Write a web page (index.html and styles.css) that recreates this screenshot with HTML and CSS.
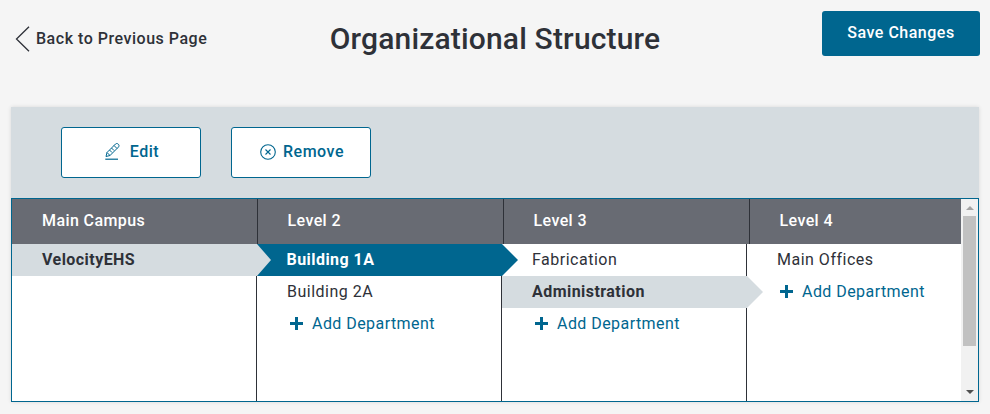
FILE: index.html
```html
<!DOCTYPE html>
<html lang="en">
<head>
<meta charset="utf-8">
<title>Organizational Structure</title>
<link rel="stylesheet" href="styles.css">
</head>
<body>
<header class="top">
  <a class="back" href="#">
    <svg class="back-icon" width="15" height="26" viewBox="0 0 15 26"><path d="M14 .8 1.500 13 14 25.200" fill="none" stroke="#2e3138" stroke-width="1.300"/></svg>
    <span>Back to Previous Page</span>
  </a>
  <h1 class="title">Organizational Structure</h1>
  <button class="save">Save Changes</button>
</header>
<section class="card">
  <div class="toolbar">
    <button class="tool tool-edit">
      <svg width="15" height="17" viewBox="0 0 15 17" fill="none" stroke="#00668f" stroke-width="1"><path d="M1 13.500 2 9.500 10.500 1c1-.8 2-.6 2.800.2s1 1.800.2 2.800L5 12.500z"/><path d="M2 9.500l3 3M9 2.500l3 3M4.500 7l2.500 2.500M6.500 5l2.500 2.500"/><path d="M.3 16.200h12.700" stroke-width="1.200"/></svg>
      Edit
    </button>
    <button class="tool tool-remove">
      <svg width="16" height="16" viewBox="0 0 16 16" fill="none" stroke="#00668f" stroke-width="1.100"><circle cx="8" cy="8" r="7.300"/><path d="M5.500 5.500l5 5M10.500 5.500l-5 5"/></svg>
      Remove
    </button>
  </div>
  <div class="table">
    <div class="main">
      <div class="heads">
        <div class="head">Main Campus</div>
        <div class="head">Level 2</div>
        <div class="head">Level 3</div>
        <div class="head last">Level 4</div>
      </div>
      <div class="cols">
        <div class="col">
          <div class="row grey first-arrow">VelocityEHS</div>
        </div>
        <div class="col">
          <div class="row blue">Building 1A</div>
          <div class="row">Building 2A</div>
          <a class="row add" href="#"><svg width="13" height="13" viewBox="0 0 13 13"><path d="M6.500 0v13M0 6.500h13" stroke="#00668f" stroke-width="3"/></svg>Add Department</a>
        </div>
        <div class="col">
          <div class="row">Fabrication</div>
          <div class="row grey">Administration</div>
          <a class="row add" href="#"><svg width="13" height="13" viewBox="0 0 13 13"><path d="M6.500 0v13M0 6.500h13" stroke="#00668f" stroke-width="3"/></svg>Add Department</a>
        </div>
        <div class="col last">
          <div class="row">Main Offices</div>
          <a class="row add" href="#"><svg width="13" height="13" viewBox="0 0 13 13"><path d="M6.500 0v13M0 6.500h13" stroke="#00668f" stroke-width="3"/></svg>Add Department</a>
        </div>
      </div>
    </div>
    <div class="scrollbar">
      <span class="arrow up"></span>
      <span class="thumb"></span>
      <span class="arrow down"></span>
    </div>
  </div>
</section>
</body>
</html>
```
FILE: styles.css
```css
* { box-sizing: border-box; }
html, body { margin: 0; height: 100%; }
body {
  background: #f5f5f5;
  font-family: Roboto, "Liberation Sans", sans-serif;
  color: #2e3138;
  overflow: hidden;
}
.top {
  height: 107px;
  display: grid;
  grid-template-columns: 1fr auto 1fr;
  align-items: start;
  padding: 11px 10px 0 15px;
}
.back {
  display: flex;
  align-items: center;
  gap: 6px;
  margin-top: 15px;
  color: #2e3138;
  text-decoration: none;
  font-size: 16px;
  font-weight: 500;
  letter-spacing: .52px;
  line-height: 26px;
}
.title {
  margin: 7px 5px 0 0;
  font-size: 30px;
  font-weight: 500;
  line-height: 42px;
  letter-spacing: .17px;
  text-align: center;
}
.save {
  justify-self: end;
  width: 158px;
  height: 45px;
  border: 0;
  border-radius: 3px;
  background: #00668f;
  color: #fff;
  font: 500 16px Roboto, sans-serif;
  letter-spacing: .5px;
  padding: 0 0 2px;
}
.card {
  margin: 0 11px;
  height: 295px;
  box-shadow: 0 0 4px rgba(0, 0, 0, .12);
}
.toolbar {
  height: 91px;
  padding: 20px 50px;
  display: flex;
  gap: 30px;
  background: #d5dce0;
}
.tool {
  width: 140px;
  height: 51px;
  display: flex;
  align-items: center;
  justify-content: center;
  padding: 0 0 2px 2px;
  background: #fff;
  border: 1px solid #00668f;
  border-radius: 3px;
  color: #00668f;
  font: 500 16px Roboto, sans-serif;
  letter-spacing: .5px;
}
.tool-edit { gap: 10px; }
.tool-remove { gap: 7px; }
.table {
  height: 204px;
  display: flex;
  background: #fff;
  border: 1px solid #00668f;
}
.main { flex: 1; min-width: 0; display: flex; flex-direction: column; }
.heads {
  height: 45px;
  display: flex;
  background: #686b73;
}
.head {
  width: 246px;
  padding-left: 30px;
  border-right: 1px solid #2e3138;
  color: #fff;
  font-size: 16px;
  font-weight: 500;
  line-height: 44px;
  letter-spacing: .4px;
}
.head:nth-child(n+2) { padding-left: 29.500px; }
.cols { flex: 1; display: flex; }
.head.last { flex: 1; border-right: 0; }
.col {
  width: 245px;
  border-right: 1px solid #2e3138;
}
.col.last { flex: 1; border-right: 0; }
.row {
  position: relative;
  display: flex;
  align-items: center;
  height: 32px;
  padding: 0 0 2px 30px;
  font-size: 16px;
  letter-spacing: .5px;
  color: #2e3138;
  text-decoration: none;
}
.grey, .blue { font-weight: 700; margin-right: -1px; }
.grey { background: #d5dce0; letter-spacing: .45px; }
.blue { background: #00668f; color: #fff; letter-spacing: .45px; padding-left: 29.500px; }
.grey::after, .blue::after {
  content: "";
  position: absolute;
  z-index: 1;
  left: 100%;
  top: 0;
  border-style: solid;
  border-width: 16px 0 16px 16px;
  border-color: transparent transparent transparent #d5dce0;
}
.blue::after { border-left-color: #00668f; }
.first-arrow::after { border-left-width: 14px; }
.add { color: #00668f; padding-left: 33px; gap: 9px; letter-spacing: .44px; }
.add svg { margin-top: 1px; }
.scrollbar {
  width: 17px;
  display: flex;
  flex-direction: column;
  align-items: center;
  background: #f1f1f1;
}
.thumb {
  width: 13px;
  height: 130px;
  background: #c1c1c1;
}
.arrow {
  width: 0;
  height: 0;
  border-left: 4px solid transparent;
  border-right: 4px solid transparent;
}
.up { margin: 7px 0 6px; border-bottom: 4px solid #a3a3a3; }
.down { margin-top: auto; margin-bottom: 7px; border-top: 4px solid #505050; }
```
